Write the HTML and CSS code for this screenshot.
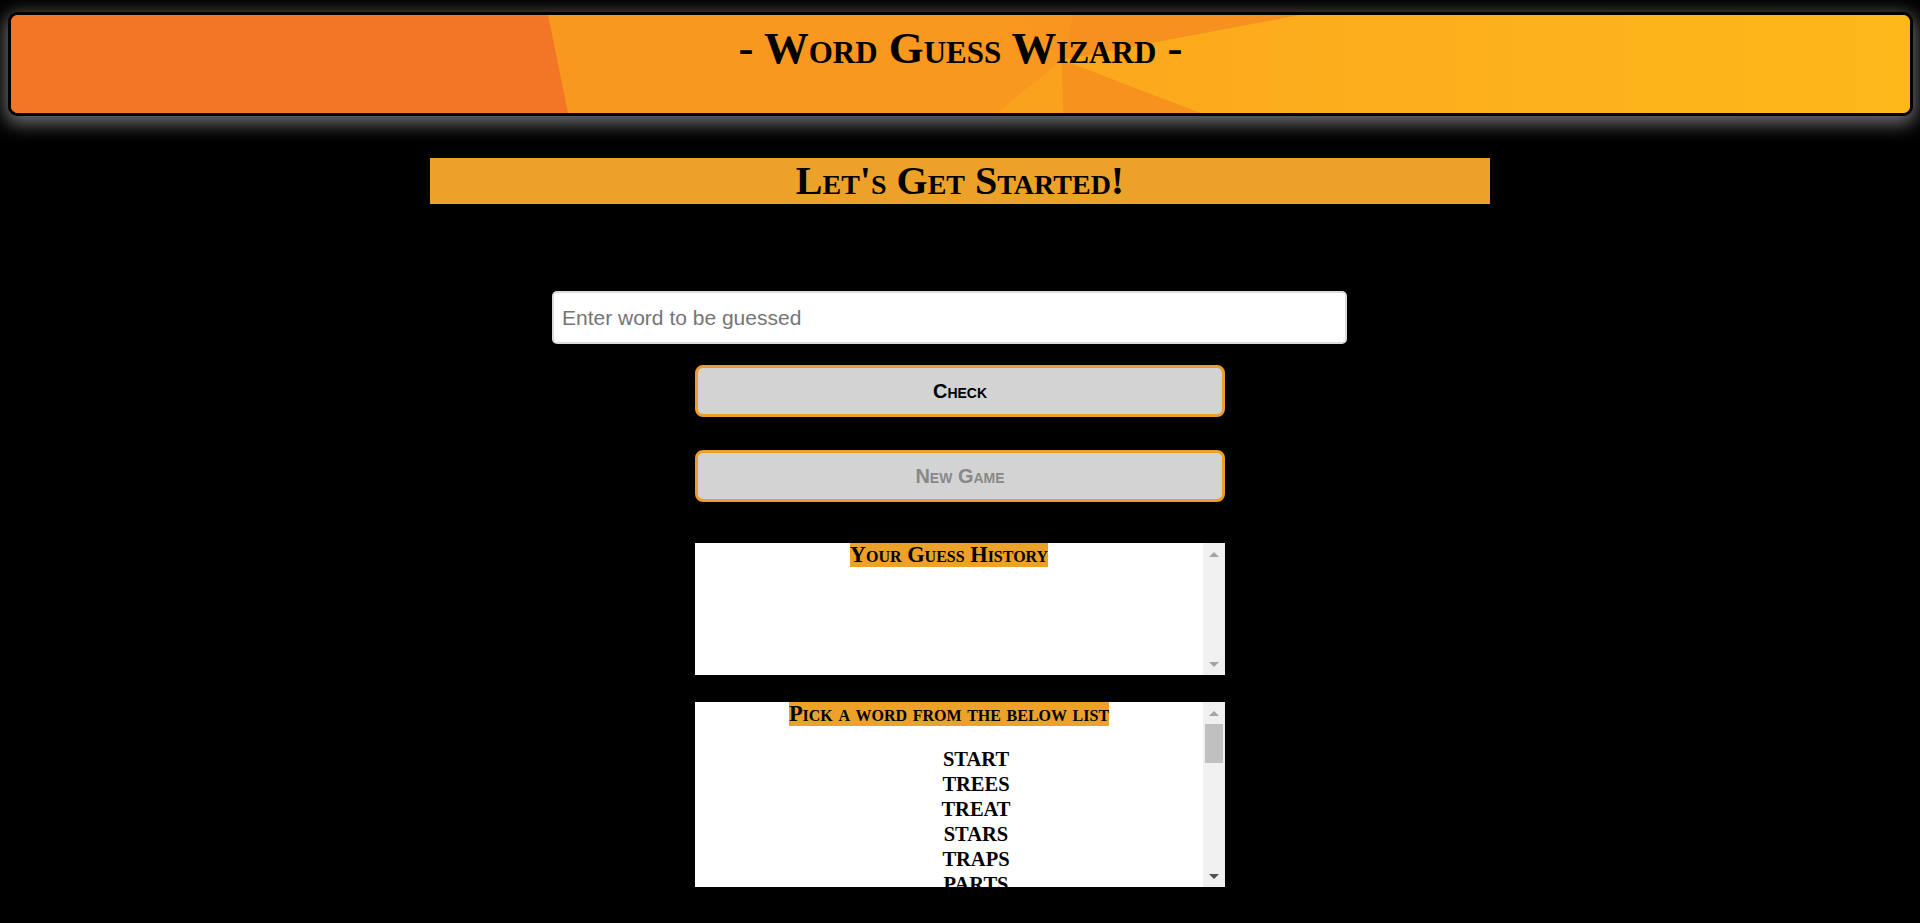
FILE: index.html
```html
<!DOCTYPE html>
<html lang="en">
<head>
<meta charset="utf-8">
<title>Word Guess Wizard</title>
<link rel="stylesheet" href="styles.css">
</head>
<body>
<header class="banner">
  <svg class="banner-bg" viewBox="0 0 1899 98" preserveAspectRatio="none" aria-hidden="true">
    <defs>
      <linearGradient id="gold" gradientUnits="userSpaceOnUse" x1="1051" y1="0" x2="1899" y2="0">
        <stop offset="0" stop-color="#fba81d"/>
        <stop offset="1" stop-color="#feb81a"/>
      </linearGradient>
    </defs>
    <rect x="0" y="0" width="1899" height="98" fill="#f8981f"/>
    <polygon points="0,0 537,0 557,98 0,98" fill="#f37526"/>
    <polygon points="1051,45 1062,0 1289,0" fill="#f7901e"/>
    <polygon points="1051,45 1009,0 1062,0" fill="#f8961f"/>
    <polygon points="1051,45 1289,0 1899,0 1899,98 1189,98" fill="url(#gold)"/>
    <polygon points="1051,45 1189,98 1052,98" fill="#f7921e"/>
    <polygon points="1051,45 1052,98 986,98" fill="#faa21e"/>
  </svg>
  <h1 class="banner-title">- Word Guess Wizard -</h1>
</header>

<main class="game">
  <h2 class="intro">Let's Get Started!</h2>
  <input class="guess-input" type="text" placeholder="Enter word to be guessed">
  <button class="btn btn-check" type="button">Check</button>
  <button class="btn btn-new" type="button" disabled>New Game</button>

  <section class="scrollbox history">
    <div class="scroll-content">
      <span class="box-title">Your Guess History</span>
    </div>
    <div class="scrollbar" aria-hidden="true">
      <div class="sb-btn"><span class="arrow arrow-up"></span></div>
      <div class="sb-track"></div>
      <div class="sb-btn"><span class="arrow arrow-down"></span></div>
    </div>
  </section>

  <section class="scrollbox wordlist">
    <div class="scroll-content">
      <span class="box-title">Pick a word from the below list</span>
      <ul class="words">
        <li>START</li>
        <li>TREES</li>
        <li>TREAT</li>
        <li>STARS</li>
        <li>TRAPS</li>
        <li>PARTS</li>
        <li>STRAP</li>
        <li>PASTE</li>
        <li>TAPES</li>
        <li>SPARE</li>
        <li>PEARS</li>
        <li>REAPS</li>
        <li>RATES</li>
        <li>STARE</li>
        <li>TEARS</li>
        <li>ASTER</li>
        <li>TAPER</li>
        <li>SPRAT</li>
        <li>STEER</li>
        <li>RESET</li>
        <li>TERSE</li>
        <li>PASTS</li>
        <li>SPATE</li>
        <li>PRATE</li>
      </ul>
    </div>
    <div class="scrollbar" aria-hidden="true">
      <div class="sb-btn"><span class="arrow arrow-up"></span></div>
      <div class="sb-track"><div class="sb-thumb"></div></div>
      <div class="sb-btn"><span class="arrow arrow-down arrow-active"></span></div>
    </div>
  </section>
</main>
</body>
</html>
```
FILE: styles.css
```css
html, body {
  margin: 0;
  padding: 0;
  background: #000;
}

body {
  font-family: "Liberation Serif", "Times New Roman", serif;
  color: #000;
}

/* ---------- banner ---------- */
.banner {
  position: relative;
  margin: 12px 7px 0 8px;
  height: 98px;
  border: 3px solid #000;
  border-radius: 10px;
  overflow: hidden;
  box-shadow: 0 5px 18px 3px rgba(255, 255, 255, 0.42);
}

.banner-bg {
  position: absolute;
  inset: 0;
  width: 100%;
  height: 100%;
  display: block;
}

.banner-title {
  position: relative;
  margin: 0;
  padding-top: 7px;
  text-align: center;
  font-size: 44.8px;
  font-weight: bold;
  font-variant: small-caps;
  line-height: normal;
}

/* ---------- main column ---------- */
.game {
  width: 1060px;
  margin: 42px auto 0;
}

.intro {
  margin: 0;
  height: 46px;
  background: #eca229;
  text-align: center;
  font-size: 40px;
  font-weight: bold;
  font-variant: small-caps;
  line-height: 46px;
}

.guess-input {
  display: block;
  box-sizing: border-box;
  width: 795px;
  height: 53px;
  margin: 87px 0 0 122px;
  padding: 0 8px;
  border: 2px solid #dcdcdc;
  border-radius: 5px;
  background: #fff;
  font-family: "Liberation Sans", Arial, sans-serif;
  font-size: 21px;
  color: #000;
  outline: none;
}

.guess-input::placeholder {
  color: #757575;
}

.btn {
  display: block;
  box-sizing: border-box;
  width: 530px;
  height: 52px;
  margin: 0 auto;
  padding: 0;
  border: 3px solid #eb9f2a;
  border-radius: 8px;
  background: #d3d3d3;
  font-family: "Liberation Sans", Arial, sans-serif;
  font-size: 20px;
  font-weight: bold;
  font-variant: small-caps;
  color: #000;
}

.btn-check {
  margin-top: 21px;
}

.btn-new {
  margin-top: 33px;
  color: #888;
}

/* ---------- scroll boxes ---------- */
.scrollbox {
  display: flex;
  width: 530px;
  margin: 0 auto;
  background: #fff;
}

.history {
  height: 132px;
  margin-top: 41px;
}

.wordlist {
  height: 185px;
  margin-top: 27px;
}

.scroll-content {
  flex: 1;
  min-width: 0;
  overflow-y: auto;
  scrollbar-width: none;
  text-align: center;
}

.box-title {
  background: #eca229;
  font-size: 22.4px;
  font-weight: bold;
  font-variant: small-caps;
  line-height: 24px;
}

.words {
  list-style: none;
  margin: 21px 0 0;
  padding: 0 0 0 54px;
  font-size: 20.5px;
  font-weight: bold;
  line-height: 25px;
}

/* ---------- drawn scrollbar ---------- */
.scrollbar {
  width: 22px;
  flex: none;
  display: flex;
  flex-direction: column;
  background: #f0f0f0;
}

.sb-btn {
  height: 22px;
  flex: none;
  display: flex;
  align-items: center;
  justify-content: center;
}

.sb-track {
  flex: 1;
  padding: 0 2px;
}

.sb-thumb {
  height: 39px;
  background: #c0c0c0;
}

.arrow {
  width: 0;
  height: 0;
  border-left: 5px solid transparent;
  border-right: 5px solid transparent;
}

.arrow-up {
  border-bottom: 5px solid #a3a3a3;
}

.arrow-down {
  border-top: 5px solid #a3a3a3;
}

.arrow-down.arrow-active {
  border-top-color: #505050;
}
```
